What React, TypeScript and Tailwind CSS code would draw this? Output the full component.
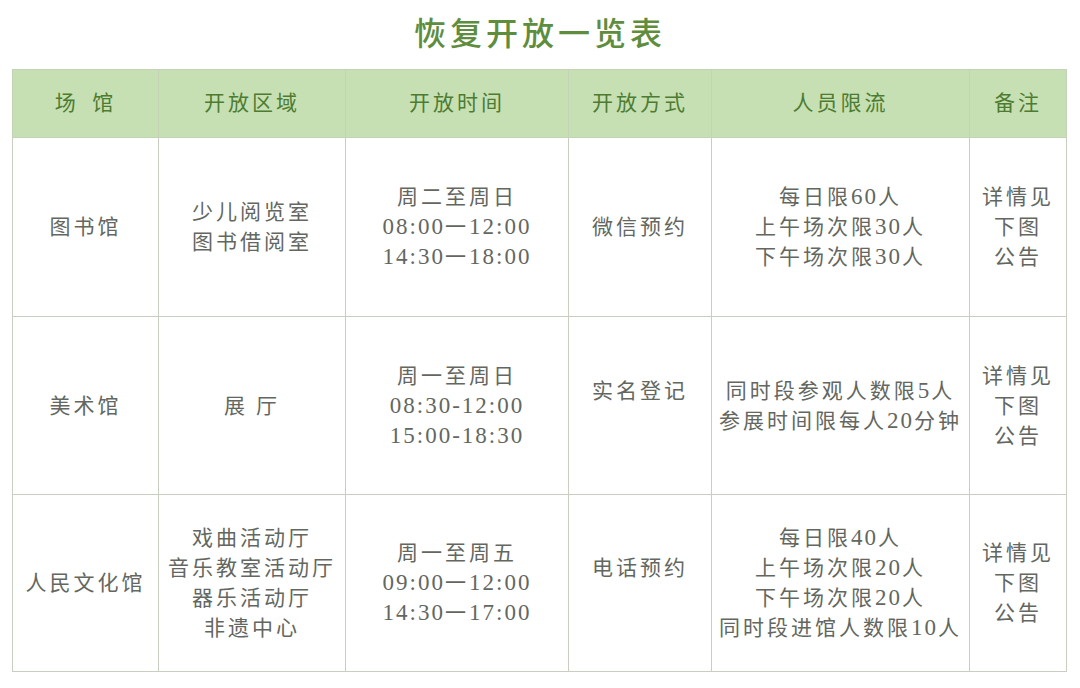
const font = {
  fontFamily: '"Liberation Serif", "Noto Sans CJK SC", serif',
};

interface Row {
  venue: string;
  areas: string[];
  times: string[];
  method: string;
  methodPad?: boolean;
  limits: string[];
  note: string[];
}

const rows: Row[] = [
  {
    venue: '图书馆',
    areas: ['少儿阅览室', '图书借阅室'],
    times: ['周二至周日', '08:00一12:00', '14:30一18:00'],
    method: '微信预约',
    limits: ['每日限60人', '上午场次限30人', '下午场次限30人'],
    note: ['详情见', '下图', '公告'],
  },
  {
    venue: '美术馆',
    areas: ['展 厅'],
    times: ['周一至周日', '08:30-12:00', '15:00-18:30'],
    method: '实名登记',
    methodPad: true,
    limits: ['同时段参观人数限5人', '参展时间限每人20分钟'],
    note: ['详情见', '下图', '公告'],
  },
  {
    venue: '人民文化馆',
    areas: ['戏曲活动厅', '音乐教室活动厅', '器乐活动厅', '非遗中心'],
    times: ['周一至周五', '09:00一12:00', '14:30一17:00'],
    method: '电话预约',
    methodPad: true,
    limits: ['每日限40人', '上午场次限20人', '下午场次限20人', '同时段进馆人数限10人'],
    note: ['详情见', '下图', '公告'],
  },
];

const heights = ['h-[179px]', 'h-[178px]', 'h-[177px]'];

const headers = ['场\u2002馆', '开放区域', '开放时间', '开放方式', '人员限流', '备注'];
const widths = ['w-[146px]', 'w-[187px]', 'w-[223px]', 'w-[143px]', 'w-[258px]', 'w-[97px]'];

// latin digits are drawn a bit larger, like the serif numerals in the source
const Line = ({ text }: { text: string }) => {
  const parts = text.split(/([0-9:\-]+)/).filter(Boolean);
  return (
    <div className="leading-[30px] h-[30px] whitespace-pre">
      {parts.map((p, i) =>
        /^[0-9:\-]+$/.test(p) ? (
          <span key={i} className="text-[23px] tracking-[2px]">
            {p}
          </span>
        ) : (
          <span key={i}>{p}</span>
        ),
      )}
    </div>
  );
};

const Lines = ({ lines }: { lines: string[] }) => (
  <div className="flex flex-col items-center">
    {lines.map((l, i) => (
      <Line key={i} text={l} />
    ))}
  </div>
);

export default function App() {
  return (
    <div className="w-[1080px] h-[688px] bg-white overflow-hidden" style={font}>
      <div className="h-[69px] flex items-center justify-center pb-[2px]">
        <h1 className="text-[32px] font-medium tracking-[4px] text-[#5e8d3e] leading-none">
          恢复开放一览表
        </h1>
      </div>
      <table className="ml-[12px] w-[1054px] border-collapse table-fixed border border-[#bcc7b0] text-[21px] text-[#63675f] tracking-[3px]">
        <thead>
          <tr className="h-[68px] bg-[#c6e0b4]">
            {headers.map((h, i) => (
              <th
                key={h}
                className={`${widths[i]} border border-[#c4d3b8] font-normal text-[21px] tracking-[3px] text-[#4d7c31] text-center align-middle whitespace-pre`}
              >
                {h}
              </th>
            ))}
          </tr>
        </thead>
        <tbody>
          {rows.map((r, ri) => (
            <tr key={r.venue} className={heights[ri]}>
              <td className="border border-[#c8cfc0] text-center align-middle">
                <Lines lines={[r.venue]} />
              </td>
              <td className="border border-[#c8cfc0] text-center align-middle">
                <Lines lines={r.areas} />
              </td>
              <td className="border border-[#c8cfc0] text-center align-middle">
                <Lines lines={r.times} />
              </td>
              <td className={`border border-[#c8cfc0] text-center align-middle ${r.methodPad ? 'pb-[30px]' : ''}`}>
                <Lines lines={[r.method]} />
              </td>
              <td className="border border-[#c8cfc0] text-center align-middle">
                <Lines lines={r.limits} />
              </td>
              <td className="border border-[#c8cfc0] text-center align-middle">
                <Lines lines={r.note} />
              </td>
            </tr>
          ))}
        </tbody>
      </table>
    </div>
  );
}
